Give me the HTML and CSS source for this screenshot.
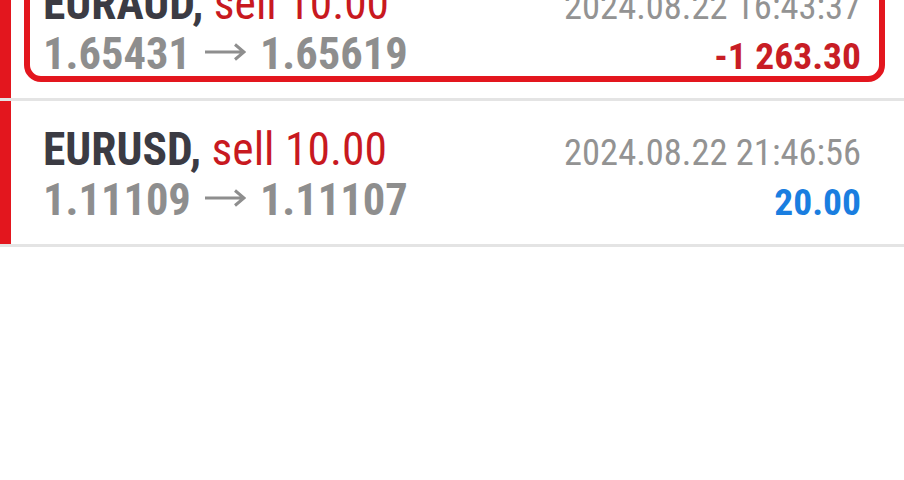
FILE: index.html
```html
<!DOCTYPE html>
<html lang="en">
<head>
  <meta charset="UTF-8" />
  <meta name="viewport" content="width=device-width, initial-scale=1.0"/>
  <title>History</title>
  <link rel="stylesheet" href="styles.css">
</head>
<body>
  <div class="deals">
    <div class="deal">
      <div class="mark"></div>
      <div class="card selected">
        <div class="line">
          <span class="title"><b class="sym">EURAUD,</b> <span class="side">sell 10.00</span></span>
          <span class="time">2024.08.22 16:43:37</span>
        </div>
        <div class="line second">
          <span class="price">1.65431<svg class="arrow" viewBox="0 0 42 18"><path d="M1 9H40M31 1.5L40 9L31 16.5"/></svg>1.65619</span>
          <span class="profit loss">-1 263.30</span>
        </div>
      </div>
    </div>
    <div class="deal">
      <div class="mark"></div>
      <div class="card">
        <div class="line">
          <span class="title"><b class="sym">EURUSD,</b> <span class="side">sell 10.00</span></span>
          <span class="time">2024.08.22 21:46:56</span>
        </div>
        <div class="line second">
          <span class="price">1.11109<svg class="arrow" viewBox="0 0 42 18"><path d="M1 9H40M31 1.5L40 9L31 16.5"/></svg>1.11107</span>
          <span class="profit">20.00</span>
        </div>
      </div>
    </div>
  </div>
</body>
</html>
```
FILE: styles.css
```css
body {
  margin: 0;
  background: #fff;
  font-family: "Roboto Condensed", Roboto, sans-serif;
}
.deals {
  margin-top: -45px;
}
.deal {
  display: flex;
  border-bottom: 3px solid #e4e4e4;
}
.mark {
  width: 11px;
  background: #e3161e;
}
.card {
  flex: 1;
  margin: 17px 19px 16px 13px;
  padding: 0 18px 0 13px;
  border: 6px solid transparent;
  border-radius: 17px;
}
.card.selected {
  border-color: #e3161e;
}
.line {
  display: flex;
  justify-content: space-between;
  align-items: baseline;
  height: 51px;
  line-height: 51px;
}
.line.second {
  height: 44px;
  line-height: 44px;
  margin-top: 3px;
}
.title {
  font-size: 45.5px;
}
.sym {
  font-weight: 700;
  color: #3b3b43;
}
.side {
  color: #c8191f;
}
.time {
  font-size: 36.5px;
  color: #939393;
}
.price {
  font-size: 44.5px;
  font-weight: 700;
  color: #8e8e8e;
}
.arrow {
  width: 42px;
  height: 18px;
  margin: 0 14px 0 13px;
  vertical-align: 0.18em;
  fill: none;
  stroke: currentColor;
  stroke-width: 3;
}
.profit {
  font-size: 37.5px;
  font-weight: 700;
  color: #1a7ee0;
}
.profit.loss {
  color: #c81d25;
}
```
